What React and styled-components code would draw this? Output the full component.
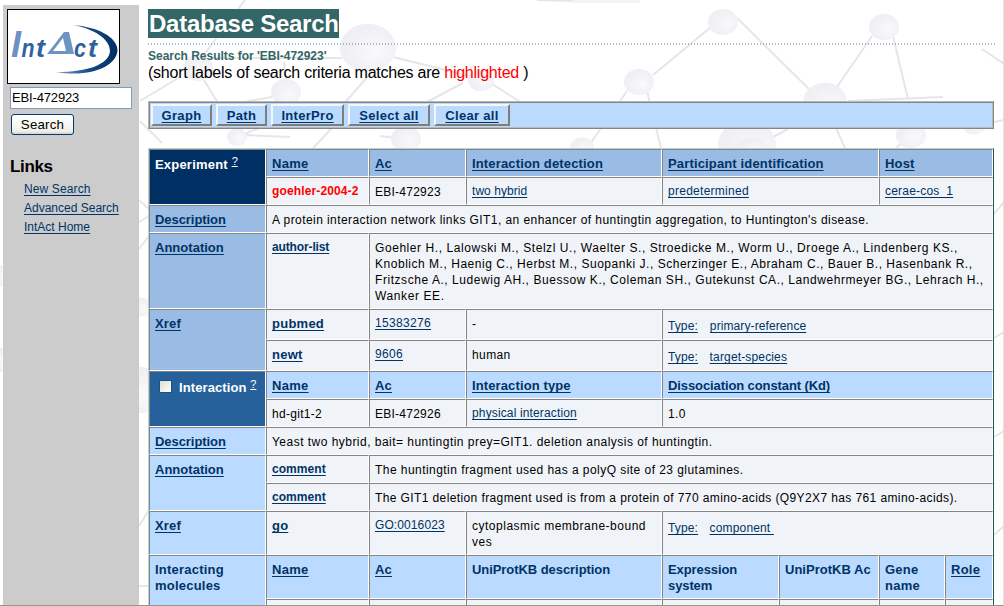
import React from "react";
import styled, { createGlobalStyle, css } from "styled-components";

const Global = createGlobalStyle`
  * { box-sizing: border-box; }
  html, body { margin: 0; height: 606px; overflow: hidden; background: #fff; }
  body { font-family: "Liberation Sans", Arial, sans-serif; }
`;

const Page = styled.div`
  position: relative;
  isolation: isolate;
  width: 1004px;
  height: 606px;
  overflow: hidden;
  display: flex;
  padding: 5px 0 0 3px;
  border-right: 1px solid #e4e2dc;
  border-bottom: 1px solid #96978c;
`;

const Backdrop = styled.svg`
  position: absolute;
  left: 0;
  top: 0;
  z-index: -1;
`;

const Sidebar = styled.aside`
  width: 136px;
  height: 601px;
  flex: none;
  background: #ccc;
  padding: 4px 0 0 4px;
  display: flex;
  flex-direction: column;
  align-items: flex-start;
`;

const LogoFrame = styled.div`
  width: 113px;
  height: 75px;
  border: 1px solid #000;
  background: #fff;
  svg { display: block; }
`;

const SearchInput = styled.input`
  width: 122px;
  height: 22px;
  margin: 3px 0 0 3px;
  padding: 0 1px 2px;
  border: 1px solid #7f9db9;
  background: #fff;
  color: #000;
  font: 13px "Liberation Sans", Arial, sans-serif;
  letter-spacing: -0.15px;
`;

const SearchButton = styled.button`
  width: 63px;
  height: 21px;
  margin: 5px 0 0 4px;
  padding: 0;
  border: 1px solid #003c74;
  border-radius: 3px;
  background: linear-gradient(#fff, #f0f0ea 85%, #d8d0c4);
  color: #000;
  font: 13.3px/18px "Liberation Sans", Arial, sans-serif;
  letter-spacing: 0.2px;
`;

const LinksTitle = styled.h2`
  margin: 22px 0 0 3px;
  font-size: 17px;
  line-height: 20px;
  letter-spacing: -0.35px;
`;

const LinkList = styled.nav`
  display: flex;
  flex-direction: column;
  align-items: flex-start;
  margin: 3px 0 0 17px;
`;

const linkLine = css`
  color: #036;
  text-decoration: underline;
  text-decoration-thickness: 1px;
  text-underline-offset: 2px;
  text-decoration-skip-ink: none;
`;

const SideLink = styled.a`
  ${linkLine}
  font-size: 12px;
  line-height: 19px;
  white-space: nowrap;
  letter-spacing: ${(p) => p.$ls}px;
`;

const Main = styled.main`
  width: 846px;
  margin-left: 9px;
  flex: none;
`;

const TitleBar = styled.header`
  height: 40px;
  width: 848px;
  padding-top: 4px;
  background: repeating-linear-gradient(90deg, #a5bccb 0 1px, transparent 1px 3px) 0 100% / 100% 2px no-repeat;
`;

const Title = styled.h1`
  display: inline-block;
  margin: 0;
  height: 29px;
  width: 191px;
  padding-left: 1px;
  background: #366;
  color: #fff;
  font-size: 24px;
  line-height: 29px;
  white-space: nowrap;
  letter-spacing: -0.25px;
`;

const Subtitle = styled.h2`
  margin: 3px 0 0;
  color: #366;
  font-size: 12px;
  line-height: 16px;
  letter-spacing: -0.02px;
`;

const Note = styled.p`
  margin: 0;
  font-size: 16px;
  line-height: 18px;
  letter-spacing: -0.235px;
  white-space: nowrap;
  em { color: #f00; font-style: normal; }
`;

const Toolbar = styled.div`
  display: flex;
  gap: 4px;
  width: 846px;
  height: 28px;
  margin-top: 19px;
  padding: 2px;
  border: 1px solid;
  border-color: #b8b8b8 #858585 #858585 #b8b8b8;
  box-shadow: inset 1px 1px #858585, inset -1px -1px #b8b8b8;
  background: #bbdaff;
`;

const ToolButton = styled.a`
  ${linkLine}
  height: 22px;
  width: ${(p) => p.$w}px;
  border: 2px solid;
  border-color: #f7f7f2 #7f7e78 #7f7e78 #f7f7f2;
  font-size: 13px;
  font-weight: bold;
  line-height: 19px;
  text-align: center;
  white-space: nowrap;
  letter-spacing: 0.3px;
`;

const Grid = styled.div`
  display: grid;
  width: 846px;
  height: 457px;
  overflow: hidden;
  margin-top: 19px;
  border: solid;
  border-width: 1px 1px 0;
  border-color: #b5d3d0 #1f5552 #b5d3d0 #b5d3d0;
  grid-template-columns: 117px 103px 97px 196px 117px 100px 66px 48px;
  grid-template-rows: 28px 28px 28px 76px 31px 31px 28px 28px 28px 28px 28px 44px 44px 28px;
`;

const tones = {
  plain: "#f0f4f8",
  mid: "#9abbe3",
  light: "#bbdaff",
  navy: "#003063",
  blue: "#27619c",
};

const Cell = styled.div`
  grid-row: span ${(p) => p.$rows ?? 1};
  grid-column: span ${(p) => p.$cols ?? 1};
  border: 1px solid;
  border-color: #848484 #fff #fff #848484;
  background: ${(p) => tones[p.$tone ?? "plain"]};
  color: ${(p) => (p.$tone === "navy" || p.$tone === "blue" ? "#fff" : p.$tone ? "#036" : "#000")};
  padding: ${(p) => p.$top ?? 6}px 0 0 5px;
  font-size: ${(p) => (p.$tone ? 13 : 12)}px;
  font-weight: ${(p) => (p.$tone ? "bold" : "normal")};
  line-height: 16px;
  white-space: nowrap;
  letter-spacing: ${(p) => p.$ls ?? (p.$tone ? 0.15 : 0.2)}px;
  sup { font-size: 11px; font-weight: normal; line-height: 0; vertical-align: 4px; text-decoration: underline; text-decoration-skip-ink: none; letter-spacing: 0; }
`;

const Line = styled.span`
  display: block;
  letter-spacing: ${(p) => p.$ls}px;
`;

const Link = styled.a`
  ${linkLine}
  font-weight: ${(p) => (p.$bold ? "bold" : "inherit")};
  font-size: ${(p) => (p.$size ? p.$size + "px" : "inherit")};
  margin-right: ${(p) => p.$gap ?? 0}px;
`;

const Match = styled.strong`
  color: #f00;
  letter-spacing: 0.13px;
`;

const Check = styled.span`
  display: inline-block;
  width: 13px;
  height: 13px;
  margin: 0 7px 0 4px;
  border: 1px solid #1c5180;
  background: linear-gradient(135deg, #dcdcd7, #fff);
  vertical-align: -1px;
`;

const nodes = [
  [198, 68, 15], [368, 48, 28], [286, 92, 15], [481, 80, 13], [237, 137, 10], [406, 139, 15],
  [723, 22, 15], [639, 82, 15], [884, 27, 15], [825, 102, 22], [747, 145, 29], [752, 150, 15], [911, 135, 15],
  [974, 124, 12], [582, 148, 12], [141, 307, 11], [138, 390, 27], [0, 276, 12], [0, 360, 14],
];
const bonds = [
  [245, 0, 203, 56], [180, 77, 140, 101], [204, 80, 218, 103], [212, 58, 342, 58], [284, 62, 286, 80],
  [370, 74, 342, 106], [393, 57, 470, 76], [463, 83, 425, 103], [492, 84, 522, 103], [272, 97, 233, 104],
  [140, 121, 162, 143], [259, 128, 240, 136], [245, 135, 290, 137], [332, 128, 313, 148], [380, 136, 396, 138],
  [537, 0, 575, 1],
  [711, 27, 653, 75], [737, 18, 818, 98], [872, 36, 837, 87], [893, 36, 908, 99], [848, 101, 943, 97],
  [627, 91, 590, 144], [647, 91, 661, 148], [982, 49, 1004, 64], [788, 129, 764, 142], [836, 128, 845, 148],
  [908, 138, 896, 148], [994, 122, 1004, 120],
  [994, 214, 1004, 202], [994, 338, 1004, 332], [994, 437, 1004, 431], [994, 535, 1004, 526],
  [139, 200, 149, 209], [139, 222, 149, 216], [139, 249, 149, 236], [139, 526, 149, 510], [139, 586, 149, 586],
];

function Molecules() {
  return (
    <Backdrop width="1004" height="606" viewBox="0 0 1004 606">
      <defs>
        <radialGradient id="ball" cx="62%" cy="58%">
          <stop offset="0" stopColor="#fafafd" />
          <stop offset="1" stopColor="#efeff4" />
        </radialGradient>
      </defs>
      {bonds.map(([x1, y1, x2, y2], i) => (
        <line key={i} x1={x1} y1={y1} x2={x2} y2={y2} stroke="#e6e6e8" strokeWidth="2" />
      ))}
      {nodes.map(([cx, cy, r], i) => (
        <ellipse key={i} cx={cx} cy={cy} rx={r} ry={r * 0.87} fill="url(#ball)" />
      ))}
      <rect x="572" y="0" width="68" height="3" fill="#f3f3f7" />
    </Backdrop>
  );
}

function Logo() {
  return (
    <svg width="111" height="73" viewBox="8 10 111 73">
      <defs>
        <linearGradient id="swoosh" x1="0" x2="1">
          <stop offset="0" stopColor="#7ba1cb" />
          <stop offset="0.55" stopColor="#164a83" />
          <stop offset="1" stopColor="#003062" />
        </linearGradient>
      </defs>
      <path d="M73 25 C98 27 117 37 117.500 50 C117 66 91 78 56 72 C89 72 109 64 110 51 C110 39 94 29 73 25Z" fill="url(#swoosh)" />
      <g fontFamily="Liberation Sans, Arial, sans-serif" fontWeight="bold" fontStyle="italic" fill="#6b92c1">
        <text x="11" y="57" fontSize="36" textLength="10" lengthAdjust="spacingAndGlyphs">I</text>
        <text x="21.500" y="57" fontSize="25" fill="#31629d" textLength="13" lengthAdjust="spacingAndGlyphs">n</text>
        <text x="36" y="57" fontSize="26" fill="#31629d" textLength="9" lengthAdjust="spacingAndGlyphs">t</text>
        <text x="74" y="57" fontSize="25" fill="#31629d" textLength="12" lengthAdjust="spacingAndGlyphs">c</text>
        <text x="88" y="57" fontSize="26" fill="#31629d" textLength="9" lengthAdjust="spacingAndGlyphs">t</text>
      </g>
      <path d="M47 54 L64 32 L69 32 L74 54 Z M53 51 L66 51 L63 38 Z" fill="#6e94c2" fillRule="evenodd" />
    </svg>
  );
}

export default function App() {
  return (
    <Page>
      <Global />
      <Molecules />
      <Sidebar>
        <LogoFrame><Logo /></LogoFrame>
        <SearchInput defaultValue="EBI-472923" />
        <SearchButton>Search</SearchButton>
        <LinksTitle>Links</LinksTitle>
        <LinkList>
          <SideLink $ls={0.12}>New Search</SideLink>
          <SideLink $ls={0}>Advanced Search</SideLink>
          <SideLink $ls={0}>IntAct Home</SideLink>
        </LinkList>
      </Sidebar>
      <Main>
        <TitleBar><Title>Database Search</Title></TitleBar>
        <Subtitle>Search Results for 'EBI-472923'</Subtitle>
        <Note>(short labels of search criteria matches are <em>highlighted</em> )</Note>
        <Toolbar>
          <ToolButton $w={61}>Graph</ToolButton>
          <ToolButton $w={51}>Path</ToolButton>
          <ToolButton $w={73}>InterPro</ToolButton>
          <ToolButton $w={82}>Select all</ToolButton>
          <ToolButton $w={76}>Clear all</ToolButton>
        </Toolbar>
        <Grid>
          <Cell $tone="navy" $rows={2} $top={7} $ls={0.2}>Experiment <sup>?</sup></Cell>
          <Cell $tone="mid" $ls={0.3}><Link>Name</Link></Cell>
          <Cell $tone="mid"><Link>Ac</Link></Cell>
          <Cell $tone="mid"><Link>Interaction detection</Link></Cell>
          <Cell $tone="mid" $cols={2}><Link>Participant identification</Link></Cell>
          <Cell $tone="mid" $cols={2}><Link>Host</Link></Cell>
          <Cell $top={5}><Match>goehler-2004-2</Match></Cell>
          <Cell $ls={0.25}>EBI-472923</Cell>
          <Cell $top={5} $ls={0.05}><Link>two hybrid</Link></Cell>
          <Cell $cols={2} $top={5} $ls={0.27}><Link>predetermined</Link></Cell>
          <Cell $cols={2} $top={5}><Link>cerae-cos_1</Link></Cell>

          <Cell $tone="mid" $ls={-0.06}><Link>Description</Link></Cell>
          <Cell $cols={7} $ls={0.43}>A protein interaction network links GIT1, an enhancer of huntingtin aggregation, to Huntington's disease.</Cell>

          <Cell $tone="mid" $ls={0.02}><Link>Annotation</Link></Cell>
          <Cell $top={5} $ls={-0.13}><Link $bold>author-list</Link></Cell>
          <Cell $cols={6}>
            <Line $ls={0.565}>Goehler H., Lalowski M., Stelzl U., Waelter S., Stroedicke M., Worm U., Droege A., Lindenberg KS.,</Line>
            <Line $ls={0.525}>Knoblich M., Haenig C., Herbst M., Suopanki J., Scherzinger E., Abraham C., Bauer B., Hasenbank R.,</Line>
            <Line $ls={0.555}>Fritzsche A., Ludewig AH., Buessow K., Coleman SH., Gutekunst CA., Landwehrmeyer BG., Lehrach H.,</Line>
            <Line $ls={0.6}>Wanker EE.</Line>
          </Cell>

          <Cell $tone="mid" $rows={2}><Link>Xref</Link></Cell>
          <Cell $ls={0.25}><Link $bold $size={13}>pubmed</Link></Cell>
          <Cell $top={5} $ls={0.33}><Link>15383276</Link></Cell>
          <Cell>-</Cell>
          <Cell $cols={4} $top={8} $ls={0.1}><Link $gap={12}>Type:</Link><Link>primary-reference</Link></Cell>
          <Cell $ls={0.25}><Link $bold $size={13}>newt</Link></Cell>
          <Cell $top={5} $ls={0.33}><Link>9606</Link></Cell>
          <Cell $ls={0.4}>human</Cell>
          <Cell $cols={4} $top={8} $ls={0.15}><Link $gap={11.5}>Type:</Link><Link>target-species</Link></Cell>

          <Cell $tone="blue" $rows={2} $top={8} $ls={0.1}><Check />Interaction <sup>?</sup></Cell>
          <Cell $tone="light" $ls={0.3}><Link>Name</Link></Cell>
          <Cell $tone="light"><Link>Ac</Link></Cell>
          <Cell $tone="light" $ls={0.12}><Link>Interaction type</Link></Cell>
          <Cell $tone="light" $cols={4} $ls={-0.1}><Link>Dissociation constant (Kd)</Link></Cell>
          <Cell $ls={0.3}>hd-git1-2</Cell>
          <Cell $ls={0.25}>EBI-472926</Cell>
          <Cell $top={5} $ls={0.14}><Link>physical interaction</Link></Cell>
          <Cell $cols={4} $ls={0.4}>1.0</Cell>

          <Cell $tone="light" $ls={-0.06}><Link>Description</Link></Cell>
          <Cell $cols={7} $ls={0.47}>Yeast two hybrid, bait= huntingtin prey=GIT1. deletion analysis of huntingtin.</Cell>

          <Cell $tone="light" $rows={2} $ls={0.02}><Link>Annotation</Link></Cell>
          <Cell $top={5} $ls={0.06}><Link $bold>comment</Link></Cell>
          <Cell $cols={6} $ls={0.45}>The huntingtin fragment used has a polyQ site of 23 glutamines.</Cell>
          <Cell $top={5} $ls={0.06}><Link $bold>comment</Link></Cell>
          <Cell $cols={6} $ls={0.39}>The GIT1 deletion fragment used is from a protein of 770 amino-acids (Q9Y2X7 has 761 amino-acids).</Cell>

          <Cell $tone="light"><Link>Xref</Link></Cell>
          <Cell><Link $bold $size={13}>go</Link></Cell>
          <Cell $top={5} $ls={0.1}><Link>GO:0016023</Link></Cell>
          <Cell $ls={0.51}>cytoplasmic membrane-bound<br />ves</Cell>
          <Cell $cols={4} $top={8} $ls={0.15}><Link $gap={11.5}>Type:</Link><Link>component&nbsp;</Link></Cell>

          <Cell $tone="light" $rows={2} $ls={0.22}>Interacting<br />molecules</Cell>
          <Cell $tone="light" $ls={0.3}><Link>Name</Link></Cell>
          <Cell $tone="light"><Link>Ac</Link></Cell>
          <Cell $tone="light" $ls={-0.06}>UniProtKB description</Cell>
          <Cell $tone="light" $ls={-0.1}>Expression<br />system</Cell>
          <Cell $tone="light" $ls={0.02}>UniProtKB Ac</Cell>
          <Cell $tone="light" $ls={0.25}>Gene<br />name</Cell>
          <Cell $tone="light" $ls={0.25}><Link>Role</Link></Cell>
          <Cell /><Cell /><Cell /><Cell /><Cell /><Cell /><Cell />
        </Grid>
      </Main>
    </Page>
  );
}
